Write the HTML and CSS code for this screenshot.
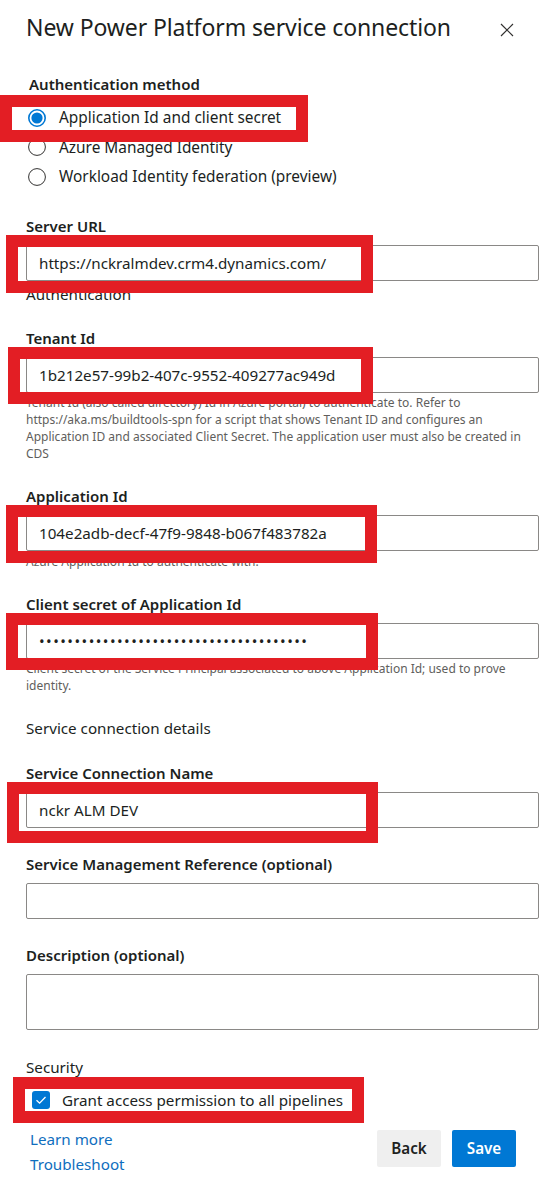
FILE: index.html
```html
<!DOCTYPE html>
<html lang="en">
<head>
<meta charset="utf-8">
<title>New Power Platform service connection</title>
<link rel="stylesheet" href="styles.css">
</head>
<body>
<div class="panel">
  <header class="header">
    <h1 class="title">New Power Platform service connection</h1>
    <button class="close" aria-label="Close">
      <svg width="14" height="14" viewBox="0 0 14 14"><path d="M1 1 L13 13 M13 1 L1 13" stroke="#323130" stroke-width="1.2" fill="none"/></svg>
    </button>
  </header>

  <div class="auth-label">Authentication method</div>
  <div class="radios">
    <div class="radio-row">
      <svg class="radio" width="18" height="18" viewBox="0 0 18 18"><circle cx="9" cy="9" r="8.2" fill="#fff" stroke="#0078d4" stroke-width="1.6"/><circle cx="9" cy="9" r="5.6" fill="#0078d4"/></svg>
      <span>Application Id and client secret</span>
    </div>
    <div class="radio-row">
      <svg class="radio" width="18" height="18" viewBox="0 0 18 18"><circle cx="9" cy="9" r="8.4" fill="#fff" stroke="#323130" stroke-width="1"/></svg>
      <span>Azure Managed Identity</span>
    </div>
    <div class="radio-row">
      <svg class="radio" width="18" height="18" viewBox="0 0 18 18"><circle cx="9" cy="9" r="8.4" fill="#fff" stroke="#323130" stroke-width="1"/></svg>
      <span>Workload Identity federation (preview)</span>
    </div>
  </div>

  <div class="field">
    <div class="label">Server URL</div>
    <div class="input">https://nckralmdev.crm4.dynamics.com/</div>
  </div>

  <div class="section section-tight">Authentication</div>

  <div class="field">
    <div class="label">Tenant Id</div>
    <div class="input">1b212e57-99b2-407c-9552-409277ac949d</div>
    <p class="help">Tenant Id (also called directory) Id in Azure portal) to authenticate to. Refer to https://aka.ms/buildtools-spn for a script that shows Tenant ID and configures an Application ID and associated Client Secret. The application user must also be created in CDS</p>
  </div>

  <div class="field">
    <div class="label">Application Id</div>
    <div class="input">104e2adb-decf-47f9-9848-b067f483782a</div>
    <p class="help">Azure Application Id to authenticate with.</p>
  </div>

  <div class="field">
    <div class="label">Client secret of Application Id</div>
    <div class="input secret">••••••••••••••••••••••••••••••••••••••</div>
    <p class="help">Client secret of the Service Principal associated to above Application Id; used to prove identity.</p>
  </div>

  <div class="section">Service connection details</div>

  <div class="field field-name">
    <div class="label">Service Connection Name</div>
    <div class="input">nckr ALM DEV</div>
  </div>

  <div class="field field-loose">
    <div class="label">Service Management Reference (optional)</div>
    <div class="input"></div>
  </div>

  <div class="field field-loose">
    <div class="label">Description (optional)</div>
    <div class="input textarea"></div>
  </div>

  <div class="section section-security">Security</div>
  <div class="check-row">
    <svg class="check" width="18" height="18" viewBox="0 0 18 18"><rect x="0" y="0" width="18" height="18" rx="3" fill="#0078d4"/><path d="M4.5 9.2 L7.6 12.2 L13.5 6" stroke="#fff" stroke-width="1.3" fill="none"/></svg>
    <span>Grant access permission to all pipelines</span>
  </div>

  <footer class="footer">
    <div class="links">
      <a href="#">Learn more</a>
      <a href="#">Troubleshoot</a>
    </div>
    <div class="buttons">
      <button class="btn btn-back">Back</button>
      <button class="btn btn-save">Save</button>
    </div>
  </footer>
</div>

<div class="mark mark-1"></div>
<div class="mark mark-2"></div>
<div class="mark mark-3"></div>
<div class="mark mark-4"></div>
<div class="mark mark-5"></div>
<div class="mark mark-6"></div>
<div class="mark mark-7"></div>
</body>
</html>
```

FILE: styles.css
```css
* { box-sizing: border-box; }
html, body { margin: 0; padding: 0; background: #fff; }
body {
  font-family: "Segoe UI", "Noto Sans", "Open Sans", sans-serif;
  color: #201f1e;
  width: 546px;
  height: 1190px;
  overflow: hidden;
  position: relative;
}
.panel { padding: 0 7px 0 26px; }

.header {
  display: flex;
  align-items: center;
  justify-content: space-between;
  padding-top: 10px;
  height: 44px;
}
.title {
  margin: 0;
  font-size: 23px;
  font-weight: 400;
  line-height: 32px;
  color: #201f1e;
  letter-spacing: -0.1px;
}
.close {
  border: 0;
  background: none;
  padding: 0;
  margin: 6px 25px 0 0;
  width: 14px;
  height: 14px;
  display: flex;
}

.auth-label {
  margin-top: 30px;
  margin-left: 3px;
  font-size: 15px;
  font-weight: 600;
  line-height: 20px;
}
.radios { margin-top: 9px; }
.radio-row {
  display: flex;
  align-items: center;
  height: 29.5px;
  padding-left: 2px;
  font-size: 15.4px;
}
.radio { margin-right: 13px; flex: none; }

.field { margin-top: 24px; }
.field-name { margin-top: 24.5px; }
.field-loose { margin-top: 26px; }
.label {
  font-size: 15px;
  font-weight: 600;
  line-height: 20px;
}
.input {
  margin-top: 9px;
  height: 36px;
  border: 1px solid #8a8886;
  border-radius: 2px;
  padding: 0 12px;
  font-size: 15.2px;
  line-height: 34px;
  color: #201f1e;
  white-space: nowrap;
  overflow: hidden;
}
.secret { letter-spacing: 1.45px; font-size: 15px; }
.textarea { height: 56px; }
.help {
  margin: 1.5px 0 0;
  font-size: 12px;
  line-height: 17px;
  color: #605e5c;
}
.section {
  margin-top: 24px;
  font-size: 15.2px;
  line-height: 20px;
}
.section-tight { margin-top: 3px; }
.section-security { margin-top: 27px; }

.check-row {
  display: flex;
  align-items: center;
  margin-top: 13px;
  margin-left: 6px;
  height: 20px;
  font-size: 15.2px;
}
.check { margin-right: 12px; flex: none; }

.footer {
  display: flex;
  justify-content: space-between;
  margin-top: 17px;
  padding-right: 23px;
}
.links {
  display: flex;
  flex-direction: column;
  padding-left: 4px;
}
.links a {
  color: #106ebe;
  text-decoration: none;
  font-size: 15.2px;
  line-height: 25px;
}
.buttons { display: flex; gap: 11px; margin-top: 3px; }
.btn {
  height: 37px;
  border: 0;
  border-radius: 2px;
  font-family: inherit;
  font-size: 15.2px;
  font-weight: 600;
  padding: 0;
}
.btn-back { background: #efefef; color: #201f1e; width: 64px; }
.btn-save { background: #0078d4; color: #fff; width: 64px; }

.mark {
  position: absolute;
  border: 12px solid #e31e24;
  pointer-events: none;
}
.mark-1 { left: 0; top: 95px; width: 308px; height: 47px; }
.mark-2 { left: 6px; top: 235px; width: 367px; height: 58px; }
.mark-3 { left: 8px; top: 347px; width: 365px; height: 57px; }
.mark-4 { left: 6px; top: 505px; width: 371px; height: 58px; }
.mark-5 { left: 6px; top: 613px; width: 372px; height: 57px; }
.mark-6 { left: 7px; top: 782px; width: 371px; height: 61px; }
.mark-7 { left: 13px; top: 1077px; width: 351px; height: 46px; }
```
